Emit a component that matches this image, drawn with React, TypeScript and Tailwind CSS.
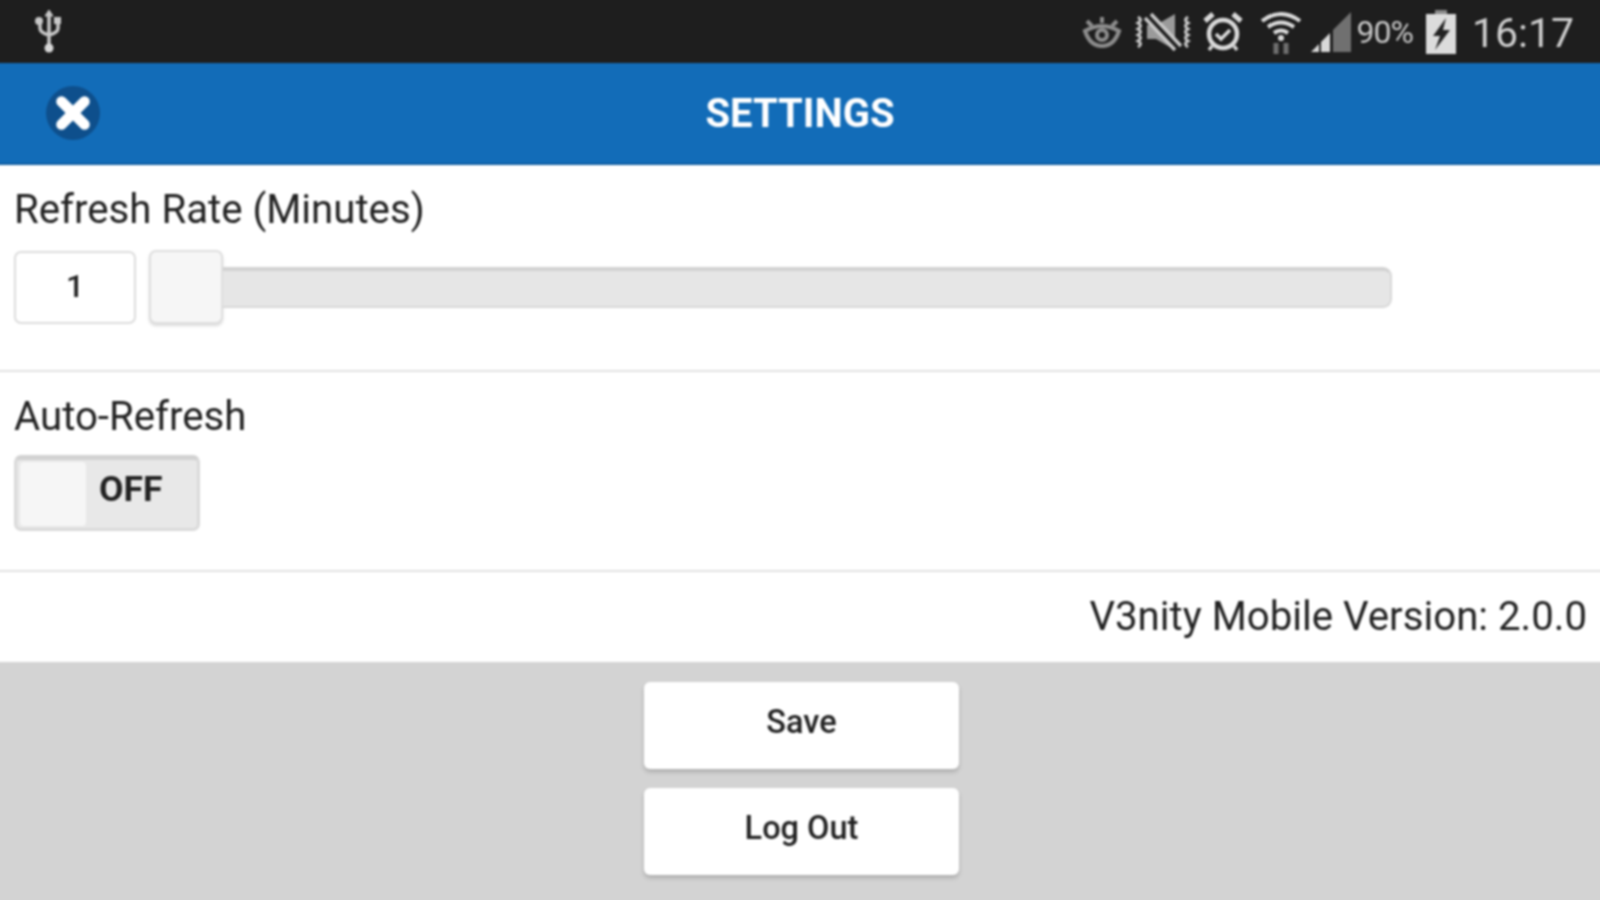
import { X } from 'lucide-react'

function UsbIcon() {
  return (
    <svg width="32" height="46" viewBox="0 0 32 46" fill="none" stroke="#c8c8c8" strokeWidth="3.5">
      <path d="M16 4v36M7 14v5q0 5 9 7q9-2 9-7v-5" />
      <path d="M16 1l4 6h-8z" fill="#c8c8c8" strokeWidth="1" />
      <circle cx="16" cy="39" r="4.5" fill="#d8d8d8" stroke="none" />
      <circle cx="6" cy="12" r="4" fill="#c8c8c8" stroke="none" />
      <rect x="21" y="8" width="7" height="7" fill="#c8c8c8" stroke="none" />
    </svg>
  )
}

function EyeIcon() {
  return (
    <svg width="40" height="34" viewBox="0 0 40 34" fill="none" stroke="#8c8c8c" strokeWidth="4">
      <path d="M3 16q17-10 34 0q-5 15-17 15t-17-15z" />
      <circle cx="20" cy="20" r="5" />
      <path d="M5 6l5 5M35 6l-5 5M20 2v6" />
    </svg>
  )
}

function MuteIcon() {
  return (
    <svg width="60" height="40" viewBox="0 0 60 40" fill="none" stroke="#c8c8c8" strokeWidth="3">
      <path d="M14 13h9L42 2v36L23 27h-9z" fill="#9a9a9a" stroke="none" />
      <path d="M14 3l30 32" stroke="#1e1e1e" strokeWidth="7" />
      <path d="M12 6l30 32M18 2l30 32" strokeWidth="3.5" />
      <path d="M5 5q5 3 0 6q5 3 0 6q5 3 0 6q5 3 0 6q5 3 0 6M55 5q-5 3 0 6q-5 3 0 6q-5 3 0 6q-5 3 0 6q-5 3 0 6" />
    </svg>
  )
}

function AlarmIcon() {
  return (
    <svg width="42" height="42" viewBox="0 0 42 42" fill="none" stroke="#dadada" strokeWidth="4.5">
      <circle cx="21" cy="23" r="14" />
      <path d="M14 23l5 5l9-9" strokeWidth="3.5" />
      <path d="M3 10l8-7M39 10l-8-7" strokeWidth="5" />
      <path d="M10 35l-3 4M32 35l3 4" strokeWidth="3.5" />
    </svg>
  )
}

function WifiIcon() {
  return (
    <svg width="42" height="44" viewBox="0 0 42 44" fill="none" stroke="#dcdcdc" strokeWidth="4">
      <path d="M2 11q19-14 38 0M8 17q13-9 26 0M14 23q7-5 14 0" />
      <circle cx="21" cy="28" r="3" fill="#dcdcdc" stroke="none" />
      <path d="M16 33v11M26 44v-11" stroke="#6f6f6f" strokeWidth="5" />
    </svg>
  )
}

function SignalIcon() {
  return (
    <svg width="40" height="42" viewBox="0 0 40 42">
      <path d="M0 41L8 33V41z" fill="#d8d8d8" />
      <path d="M10 41V31L19 22V41z" fill="#d8d8d8" />
      <path d="M22 41V19L40 1V41z" fill="#707070" />
    </svg>
  )
}

function BatteryIcon() {
  return (
    <svg width="32" height="46" viewBox="0 0 32 46">
      <path d="M10 1h12v4h-12z" fill="#8a8a8a" />
      <path d="M1 5h30v40h-30z" fill="#dcdcdc" />
      <path d="M21 9L8 27h7l-5 14L25 21h-7z" fill="#222" />
    </svg>
  )
}

export default function App() {
  return (
    <div className="w-[1600px] h-[900px] overflow-hidden">
      {/* 4px bleed on every side so the blur does not fade at the page edge */}
      <div className="-m-[4px] w-[1608px] h-[908px] bg-white flex flex-col blur-[0.8px] font-['Roboto',sans-serif]">
        {/* Status bar */}
        <div className="h-[67px] pt-[4px] shrink-0 bg-[#1e1e1e] flex items-center pl-[37px] pr-[30px]">
          <UsbIcon />
          <div className="ml-auto flex items-center">
            <EyeIcon />
            <div className="ml-[11px]"><MuteIcon /></div>
            <div className="ml-[9px]"><AlarmIcon /></div>
            <div className="ml-[16px]"><WifiIcon /></div>
            <div className="ml-[9px]"><SignalIcon /></div>
            <span className="ml-[5px] text-[32px] tracking-[-1px] text-[#c8c8c8]">90%</span>
            <div className="ml-[12px]"><BatteryIcon /></div>
            <span className="ml-[15px] mt-[3px] text-[41px] leading-none text-[#cfcfcf]">16:17</span>
          </div>
        </div>

        {/* Header */}
        <div className="relative h-[102px] shrink-0 bg-[#126cb8] border-b-2 border-[#0f5da0] flex items-center justify-center">
          <div className="absolute left-[50px] top-[23px] w-[54px] h-[54px] rounded-full bg-[#0e4f8c] flex items-center justify-center">
            <X size={46} color="#fff" strokeWidth={5.5} />
          </div>
          <span className="mt-[2px] text-[40px] font-bold text-white">SETTINGS</span>
        </div>

        {/* Refresh rate */}
        <div className="h-[207px] shrink-0 border-b-2 border-[#e2e2e2] pt-[21px] px-[18px]">
          <div className="text-[40.2px] leading-[48px] text-[#222]">Refresh Rate (Minutes)</div>
          <div className="mt-[16px] flex items-center w-[1378px]">
            <div className="w-[122px] h-[73px] rounded-[7px] border-2 border-[#dcdcdc] bg-white flex items-center justify-center pb-[2px] text-[32px] font-medium text-[#222]">
              1
            </div>
            <div className="ml-[13px] w-[74px] h-[74px] rounded-[7px] border-2 border-[#dedede] bg-[#f6f6f6] shadow-[0_2px_3px_rgba(0,0,0,0.15)] shrink-0" />
            <div className="flex-1 h-[41px] rounded-r-[9px] bg-[#e6e6e6] border-2 border-[#d8d8d8] border-l-0 border-t-4 border-t-[#d2d2d2]" />
          </div>
        </div>

        {/* Auto refresh */}
        <div className="h-[200px] shrink-0 border-b-2 border-[#e2e2e2] pt-[21px] px-[18px]">
          <div className="text-[40.2px] leading-[48px] text-[#222]">Auto-Refresh</div>
          <div className="mt-[14px] w-[186px] h-[76px] rounded-[7px] bg-[#e8e8e8] border-[3px] border-[#dadada] border-t-[5px] border-t-[#d2d2d2] flex items-center">
            <div className="w-[66px] h-[64px] rounded-[4px] ml-[3px] bg-[#f6f6f6]" />
            <span className="ml-[13px] mb-[8px] text-[35.5px] font-bold text-[#222]">OFF</span>
          </div>
        </div>

        {/* Version */}
        <div className="h-[90px] shrink-0 flex items-center justify-end pr-[17px]">
          <span className="text-[40.2px] text-[#222]">V3nity Mobile Version: 2.0.0</span>
        </div>

        {/* Footer */}
        <div className="flex-1 bg-[#d3d3d3] flex flex-col items-center pt-[20px] pl-[3px] gap-[19px]">
          <button className="w-[315px] h-[87px] rounded-[6px] bg-white shadow-[0_3px_4px_rgba(0,0,0,0.18)] text-[32.5px] font-medium text-[#222] pb-[6px]">
            Save
          </button>
          <button className="w-[315px] h-[87px] rounded-[6px] bg-white shadow-[0_3px_4px_rgba(0,0,0,0.18)] text-[32.5px] font-medium text-[#222] pb-[6px]">
            Log Out
          </button>
        </div>
      </div>
    </div>
  )
}
